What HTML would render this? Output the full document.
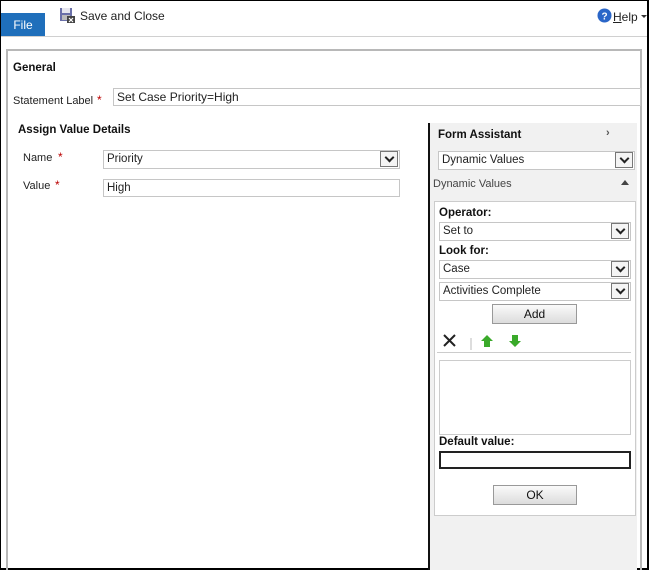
<!DOCTYPE html>
<html><head><style>
*{margin:0;padding:0;box-sizing:border-box}
body{width:649px;height:570px;position:relative;overflow:hidden;background:#fff;font-family:"Liberation Sans",sans-serif;font-size:11px;color:#222}
.a{position:absolute}
.b{font-weight:bold;color:#111;font-size:11.5px}
.in{position:absolute;border:1px solid #c6c6c6;background:#fff;padding-left:3px;line-height:17px;font-size:11.5px;color:#222}
.sel .arr{position:absolute;right:1px;top:0px;width:18px;height:16px;border:1px solid #777;background:#f4f4f4}
.arr:after{content:"";position:absolute;left:5px;top:2px;width:5px;height:5px;border-right:2px solid #222;border-bottom:2px solid #222;transform:rotate(45deg)}
.req{color:#b00;position:absolute;font-size:12px}
.btn{position:absolute;border:1px solid #999;background:linear-gradient(#fafafa,#dcdcdc);text-align:center;font-size:12px;color:#111}
</style></head><body>
<div class="a" style="left:0;top:0;width:649px;height:570px;border:1px solid #000;border-right:2px solid #000;border-bottom:2px solid #000"></div>
<div class="a" style="left:1px;top:13px;width:44px;height:23px;background:#1f6fbb;color:#fff;font-size:12px;line-height:24px;text-align:center">File</div>
<svg class="a" style="left:59px;top:7px" width="17" height="17" viewBox="0 0 17 17"><rect x="1" y="1" width="12" height="13" fill="#6a6fa8"/><rect x="3" y="1" width="8" height="5" fill="#e6e6ee"/><rect x="3" y="8" width="8" height="5" fill="#bbb"/><rect x="8" y="9" width="8" height="7" fill="#444"/><path d="M10 11l4 4M14 11l-4 4" stroke="#fff" stroke-width="1.2"/></svg>
<div class="a" style="left:80px;top:9px;font-size:12px;color:#222">Save and Close</div>
<svg class="a" style="left:597px;top:8px" width="15" height="15"><circle cx="7.5" cy="7.5" r="7" fill="#2a66c8"/><text x="7.5" y="11.5" font-size="10" font-weight="bold" fill="#fff" text-anchor="middle" font-family="Liberation Sans">?</text></svg>
<div class="a" style="left:613px;top:10px;font-size:12px;color:#222"><u>H</u>elp</div>
<div class="a" style="left:641px;top:15px;border:3px solid transparent;border-top:3px solid #333"></div>
<div class="a" style="left:1px;top:36px;width:646px;height:1px;background:#d0d0d0"></div>
<div class="a" style="left:6px;top:49px;width:636px;height:521px;border:2px solid #b8b8b8;border-bottom:none"></div>
<div class="a b" style="left:13px;top:62px">General</div>
<div class="a" style="left:13px;top:95px">Statement Label</div>
<div class="req" style="left:97px;top:93px">*</div>
<div class="in" style="left:113px;top:88px;width:528px;height:18px;font-size:12px">Set Case Priority=High</div>
<div class="a b" style="left:18px;top:124px">Assign Value Details</div>
<div class="a" style="left:23px;top:152px">Name</div><div class="req" style="left:58px;top:150px">*</div>
<div class="in sel" style="left:103px;top:150px;width:297px;height:19px">Priority<span class="arr"></span></div>
<div class="a" style="left:23px;top:180px">Value</div><div class="req" style="left:55px;top:178px">*</div>
<div class="in" style="left:103px;top:179px;width:297px;height:18px">High</div>
<div class="a" style="left:428px;top:123px;width:2px;height:447px;background:#111"></div>
<div class="a" style="left:430px;top:123px;width:207px;height:447px;background:#f1f1f1"></div>
<div class="a b" style="left:438px;top:129px">Form Assistant</div>
<div class="a" style="left:606px;top:127px;font-weight:bold;color:#555">›</div>
<div class="in sel" style="left:438px;top:151px;width:197px;height:19px">Dynamic Values<span class="arr"></span></div>
<div class="a" style="left:433px;top:178px;color:#444">Dynamic Values</div>
<div class="a" style="left:621px;top:180px;border:4px solid transparent;border-bottom:5px solid #444;border-top:none"></div>
<div class="a" style="left:434px;top:201px;width:202px;height:315px;background:#fff;border:1px solid #ccc"></div>
<div class="a b" style="left:439px;top:207px">Operator:</div>
<div class="in sel" style="left:439px;top:222px;width:192px;height:19px">Set to<span class="arr"></span></div>
<div class="a b" style="left:439px;top:245px">Look for:</div>
<div class="in sel" style="left:439px;top:260px;width:192px;height:19px">Case<span class="arr"></span></div>
<div class="in sel" style="left:439px;top:282px;width:192px;height:19px">Activities Complete<span class="arr"></span></div>
<div class="btn" style="left:492px;top:304px;width:85px;height:20px;line-height:18px">Add</div>
<svg class="a" style="left:443px;top:334px" width="80" height="16"><path d="M1 1l11 11M12 1L1 12" stroke="#222" stroke-width="2"/><path d="M28 4v13" stroke="#bbb"/><path d="M44 1l-6 6h3v6h6v-6h3z" fill="#3aaa2a"/><path d="M72 13l-6-6h3v-6h6v6h3z" fill="#3aaa2a"/></svg>
<div class="a" style="left:437px;top:352px;width:194px;height:1px;background:#ccc"></div>
<div class="a" style="left:439px;top:360px;width:192px;height:75px;border:1px solid #ccc"></div>
<div class="a b" style="left:439px;top:436px">Default value:</div>
<div class="a" style="left:439px;top:451px;width:192px;height:18px;border:2px solid #222"></div>
<div class="btn" style="left:493px;top:485px;width:84px;height:20px;line-height:18px">OK</div>
</body></html>
